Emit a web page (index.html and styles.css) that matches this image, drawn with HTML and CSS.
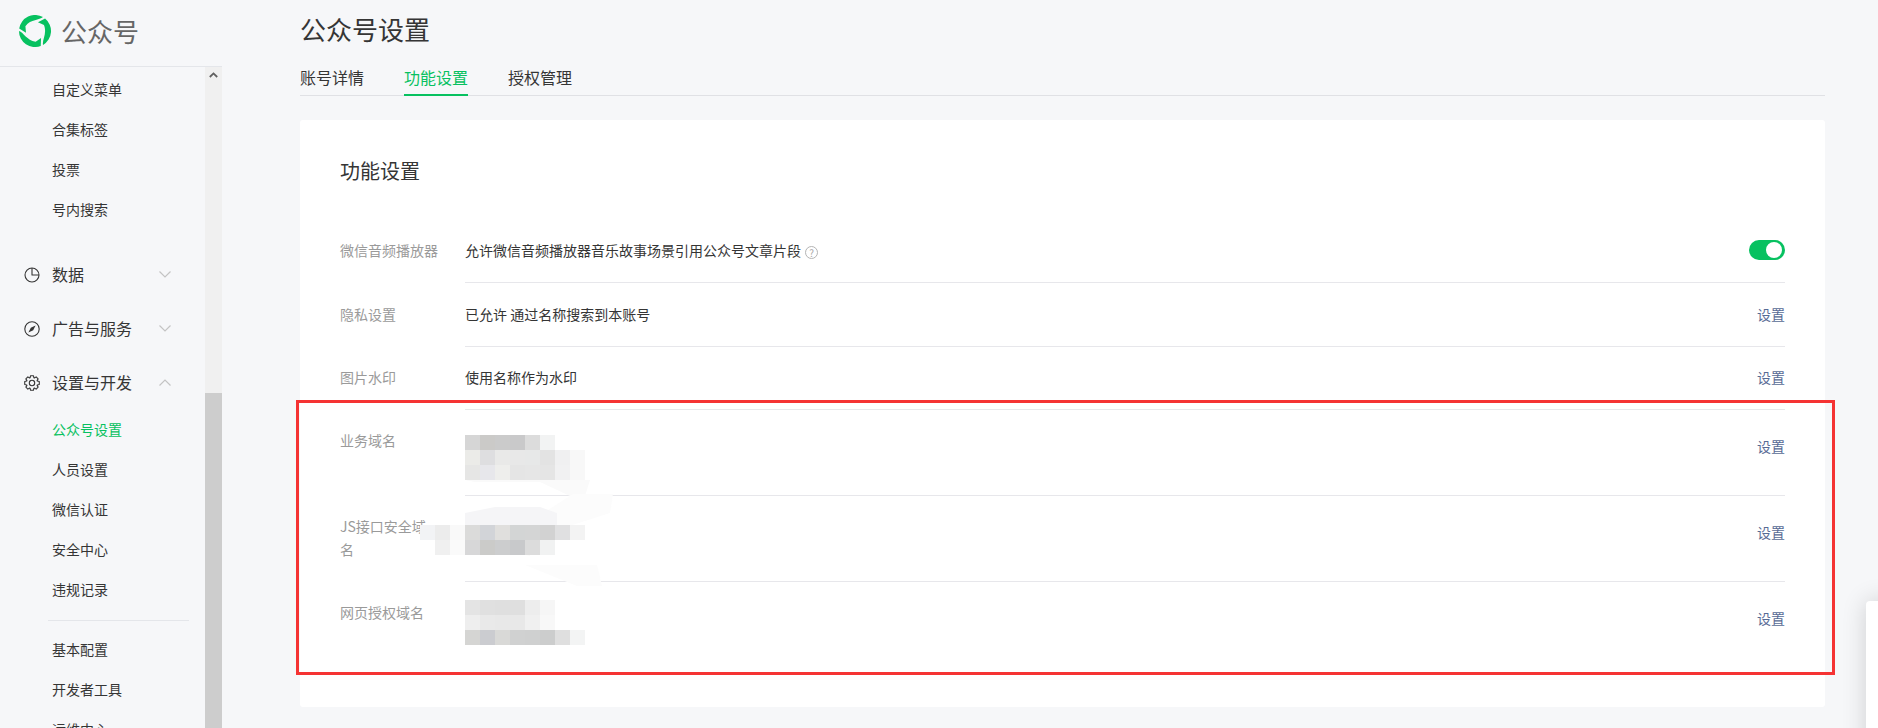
FILE: index.html
```html
<!DOCTYPE html>
<html lang="zh-CN">
<head>
<meta charset="utf-8">
<title>公众号设置</title>
<link rel="stylesheet" href="styles.css">
</head>
<body>
<aside class="sidebar">
  <header class="brand">
    <svg class="brand-logo" viewBox="-17 -16 34 32">
      <g fill="#07c160">
        <path d="M-15.8 -2.5A16 16 0 0 1 8 -13.9C4.5 -10.5 -4 -12 -9.6 -4.8L-9 1.8Z"/>
        <path d="M-15.8 -2.5A16 16 0 0 1 8 -13.9C4.5 -10.5 -4 -12 -9.6 -4.8L-9 1.8Z" transform="rotate(120)"/>
        <path d="M-15.8 -2.5A16 16 0 0 1 8 -13.9C4.5 -10.5 -4 -12 -9.6 -4.8L-9 1.8Z" transform="rotate(240)"/>
      </g>
    </svg>
    <span class="brand-name">公众号</span>
  </header>
  <div class="side-body">
    <nav class="nav">
      <a class="sub">自定义菜单</a>
      <a class="sub">合集标签</a>
      <a class="sub">投票</a>
      <a class="sub">号内搜索</a>
      <div class="group group-first">
        <svg class="group-icon" viewBox="0 0 16 16"><circle cx="8" cy="8" r="7"/><path d="M8 1V8H15"/></svg>
        <span>数据</span>
        <svg class="chev" viewBox="0 0 12 7"><path d="M0.5 0.5L6 6L11.5 0.5"/></svg>
      </div>
      <div class="group">
        <svg class="group-icon" viewBox="0 0 16 16"><circle cx="8" cy="8" r="7.2"/><path class="needle" d="M11.6 4.4L9.2 9.2L4.4 11.6L6.8 6.8Z"/></svg>
        <span>广告与服务</span>
        <svg class="chev" viewBox="0 0 12 7"><path d="M0.5 0.5L6 6L11.5 0.5"/></svg>
      </div>
      <div class="group">
        <svg class="group-icon" viewBox="-8 -8 16 16"><polygon points="7.27,-1.41 7.27,1.41 5.26,1.92 5.08,2.37 6.13,4.14 4.14,6.13 2.37,5.08 1.92,5.26 1.41,7.27 -1.41,7.27 -1.92,5.26 -2.37,5.08 -4.14,6.13 -6.13,4.14 -5.08,2.37 -5.26,1.92 -7.27,1.41 -7.27,-1.41 -5.26,-1.92 -5.08,-2.37 -6.13,-4.14 -4.14,-6.13 -2.37,-5.08 -1.92,-5.26 -1.41,-7.27 1.41,-7.27 1.92,-5.26 2.37,-5.08 4.14,-6.13 6.13,-4.14 5.08,-2.37 5.26,-1.92"/><circle r="2.7"/></svg>
        <span>设置与开发</span>
        <svg class="chev" viewBox="0 0 12 7"><path d="M0.5 6.5L6 1L11.5 6.5"/></svg>
      </div>
      <a class="sub sub-active">公众号设置</a>
      <a class="sub">人员设置</a>
      <a class="sub">微信认证</a>
      <a class="sub">安全中心</a>
      <a class="sub">违规记录</a>
      <hr class="nav-rule">
      <a class="sub">基本配置</a>
      <a class="sub">开发者工具</a>
      <a class="sub">运维中心</a>
    </nav>
    <div class="scrollbar">
      <svg class="scroll-arrow" viewBox="0 0 9 6"><path d="M0.8 5L4.5 1.4L8.2 5"/></svg>
      <div class="scroll-thumb"></div>
    </div>
  </div>
</aside>

<main class="main">
  <h1 class="page-title">公众号设置</h1>
  <div class="tabs">
    <a class="tab">账号详情</a>
    <a class="tab tab-active">功能设置</a>
    <a class="tab">授权管理</a>
  </div>
  <section class="card">
    <h2 class="card-title">功能设置</h2>

    <div class="row">
      <div class="row-label">微信音频播放器</div>
      <div class="row-body">
        <div class="row-value">允许微信音频播放器音乐故事场景引用公众号文章片段<span class="help">?</span></div>
        <span class="switch"><span class="knob"></span></span>
      </div>
    </div>

    <div class="row">
      <div class="row-label">隐私设置</div>
      <div class="row-body">
        <div class="row-value">已允许 通过名称搜索到本账号</div>
        <a class="action">设置</a>
      </div>
    </div>

    <div class="row">
      <div class="row-label">图片水印</div>
      <div class="row-body">
        <div class="row-value">使用名称作为水印</div>
        <a class="action">设置</a>
      </div>
    </div>

    <div class="row row-tall">
      <div class="row-label">业务域名</div>
      <div class="row-body">
        <div class="row-value">
          <svg class="mosaic" viewBox="0 0 120 45">
            <path fill="#fafafa" d="M0 50L10 52H75L105 66H120L125 50Z"/>
            <rect x="0" y="5" width="15" height="15" fill="#d6d6d6"/><rect x="15" y="5" width="15" height="15" fill="#cbcac8"/><rect x="30" y="5" width="15" height="15" fill="#cbcbcb"/><rect x="45" y="5" width="15" height="15" fill="#c9c9ca"/><rect x="60" y="5" width="15" height="15" fill="#dcdcdc"/><rect x="75" y="5" width="15" height="15" fill="#f2f3f3"/>
            <rect x="0" y="20" width="15" height="15" fill="#ebebe8"/><rect x="15" y="20" width="15" height="15" fill="#dedee0"/><rect x="30" y="20" width="15" height="15" fill="#e9e9e8"/><rect x="45" y="20" width="15" height="15" fill="#e8e8e8"/><rect x="60" y="20" width="15" height="15" fill="#e7e8e8"/><rect x="75" y="20" width="15" height="15" fill="#e3e3e3"/><rect x="90" y="20" width="15" height="15" fill="#f0f0f1"/><rect x="105" y="20" width="15" height="15" fill="#f8f8f8"/>
            <rect x="0" y="35" width="15" height="15" fill="#e6e6e5"/><rect x="15" y="35" width="15" height="15" fill="#e7e7eb"/><rect x="30" y="35" width="15" height="15" fill="#eeeeec"/><rect x="45" y="35" width="15" height="15" fill="#e5e5e5"/><rect x="60" y="35" width="15" height="15" fill="#e6e6e6"/><rect x="75" y="35" width="15" height="15" fill="#e5e5e5"/><rect x="90" y="35" width="15" height="15" fill="#f1f1f2"/><rect x="105" y="35" width="15" height="15" fill="#f8f8f8"/>
          </svg>
        </div>
        <a class="action">设置</a>
      </div>
    </div>

    <div class="row row-tall">
      <div class="row-label">JS接口安全域名</div>
      <div class="row-body">
        <div class="row-value">
          <svg class="mosaic" viewBox="0 0 120 45">
            <path fill="#fcfcfc" d="M108 -22H148L145 -3L92 14H60L80 -4Z"/>
            <path fill="#f5f5f7" d="M0 -3L30 -9H75L92 -3V9H0Z"/>
            <path fill="#fbfbfb" d="M35 24H65V40L35 34Z"/>
            <path fill="#fcfcfc" d="M60 49H132L137 70H112Z"/>
            <rect x="-45" y="9" width="15" height="15" fill="#f2f3f5"/><rect x="-30" y="9" width="15" height="15" fill="#ececec"/><rect x="-15" y="9" width="15" height="15" fill="#f9f9f9"/>
            <rect x="-30" y="24" width="15" height="15" fill="#f0f0f0"/><rect x="-15" y="24" width="15" height="15" fill="#fafafa"/>
            <rect x="0" y="9" width="15" height="15" fill="#dbdbda"/><rect x="15" y="9" width="15" height="15" fill="#d2d4d8"/><rect x="30" y="9" width="15" height="15" fill="#e0dfdd"/><rect x="45" y="9" width="15" height="15" fill="#d3d5d5"/><rect x="60" y="9" width="15" height="15" fill="#d4d5d5"/><rect x="75" y="9" width="15" height="15" fill="#d2d2d2"/><rect x="90" y="9" width="15" height="15" fill="#e0e0e1"/><rect x="105" y="9" width="15" height="15" fill="#f3f3f3"/>
            <rect x="0" y="24" width="15" height="15" fill="#d7d7d8"/><rect x="15" y="24" width="15" height="15" fill="#cbcbc9"/><rect x="30" y="24" width="15" height="15" fill="#cccdce"/><rect x="45" y="24" width="15" height="15" fill="#c8c9cb"/><rect x="60" y="24" width="15" height="15" fill="#dcdcdc"/><rect x="75" y="24" width="15" height="15" fill="#f1f2f2"/>
          </svg>
        </div>
        <a class="action">设置</a>
      </div>
    </div>

    <div class="row row-tall row-last">
      <div class="row-label">网页授权域名</div>
      <div class="row-body">
        <div class="row-value">
          <svg class="mosaic" viewBox="0 0 120 45">
            <rect x="0" y="-2" width="15" height="15" fill="#e4e4e4"/><rect x="15" y="-2" width="15" height="15" fill="#e0e0e0"/><rect x="30" y="-2" width="15" height="15" fill="#dfdfdf"/><rect x="45" y="-2" width="15" height="15" fill="#dfdfdf"/><rect x="60" y="-2" width="15" height="15" fill="#ededed"/><rect x="75" y="-2" width="15" height="15" fill="#f6f6f6"/>
            <rect x="0" y="13" width="15" height="15" fill="#eeeeee"/><rect x="15" y="13" width="15" height="15" fill="#e9e9e9"/><rect x="30" y="13" width="15" height="15" fill="#e8e8e8"/><rect x="45" y="13" width="15" height="15" fill="#e8e8e8"/><rect x="60" y="13" width="15" height="15" fill="#f0f0f0"/><rect x="75" y="13" width="15" height="15" fill="#f8f8f8"/>
            <rect x="0" y="28" width="15" height="15" fill="#d5d5d3"/><rect x="15" y="28" width="15" height="15" fill="#cbccd0"/><rect x="30" y="28" width="15" height="15" fill="#d9d9d7"/><rect x="45" y="28" width="15" height="15" fill="#d0d1d1"/><rect x="60" y="28" width="15" height="15" fill="#cfd0d0"/><rect x="75" y="28" width="15" height="15" fill="#cccdcd"/><rect x="90" y="28" width="15" height="15" fill="#dfdfdf"/><rect x="105" y="28" width="15" height="15" fill="#f3f4f4"/>
          </svg>
        </div>
        <a class="action">设置</a>
      </div>
    </div>
  </section>
</main>

<div class="annotation"></div>
<div class="corner-panel"></div>
</body>
</html>
```

FILE: styles.css
```css
* {
  box-sizing: border-box;
}

html,
body {
  margin: 0;
  height: 728px;
  overflow: hidden;
}

body {
  display: flex;
  background: #f6f7f9;
  color: #353535;
  font-family: "Noto Sans CJK SC", "Noto Sans", "Liberation Sans", sans-serif;
}

/* Sidebar */
.sidebar {
  flex: 0 0 222px;
  height: 728px;
  display: flex;
  flex-direction: column;
}

.brand {
  flex: 0 0 67px;
  display: flex;
  align-items: center;
  gap: 9px;
  padding: 0 0 5px 18px;
  border-bottom: 1px solid #e4e6ea;
}

.brand-logo {
  width: 34px;
  height: 32px;
}

.brand-name {
  font-size: 26px;
  color: #666;
  line-height: 32px;
}

.side-body {
  flex: 1;
  display: flex;
  min-height: 0;
}

.nav {
  flex: 1;
  padding-top: 2px;
  overflow: hidden;
}

.sub {
  display: block;
  height: 40px;
  line-height: 40px;
  padding-left: 52px;
  font-size: 14px;
  color: #353535;
}

.sub-active {
  color: #07c160;
}

.group {
  display: flex;
  align-items: center;
  gap: 12px;
  height: 54px;
  padding-left: 24px;
  font-size: 16px;
  color: #353535;
}

.group-first {
  margin-top: 18px;
}

.group-icon {
  flex: 0 0 16px;
  width: 16px;
  height: 16px;
  margin-top: 1px;
  overflow: visible;
  fill: none;
  stroke: #353535;
  stroke-width: 1.1;
  stroke-linejoin: round;
}

.needle {
  fill: #353535;
  stroke: none;
}

.chev {
  width: 12px;
  height: 7px;
  margin-left: auto;
  margin-right: 34px;
  fill: none;
  stroke: #c4c4c4;
  stroke-width: 1.2;
}

.nav-rule {
  height: 1px;
  margin: 11px 16px 8px 48px;
  border: 0;
  background: #e4e6ea;
}

.scrollbar {
  flex: 0 0 17px;
  position: relative;
  display: flex;
  flex-direction: column;
  background: #f0f0f0;
}

.scroll-arrow {
  position: absolute;
  top: 5px;
  left: 4px;
  width: 9px;
  height: 6px;
  fill: none;
  stroke: #606060;
  stroke-width: 1.8;
}

.scroll-thumb {
  flex: 1;
  margin-top: 326px;
  background: #cdcdcd;
}

/* Main */
.main {
  flex: 1;
  min-width: 0;
  margin: 0 53px 0 78px;
  padding-top: 12px;
}

.page-title {
  margin: 0;
  font-size: 26px;
  line-height: 34px;
  font-weight: 400;
  color: #353535;
}

.tabs {
  display: flex;
  gap: 40px;
  margin-top: 16px;
  border-bottom: 1px solid #e0e1e5;
}

.tab {
  position: relative;
  height: 33px;
  line-height: 31px;
  font-size: 16px;
  color: #353535;
}

.tab-active {
  color: #07c160;
}

.tab-active::after {
  content: "";
  position: absolute;
  left: 0;
  right: 0;
  bottom: -1px;
  height: 2px;
  background: #07c160;
}

.card {
  margin-top: 24px;
  padding: 36px 40px 40px;
  background: #fff;
  border-radius: 3px;
}

.card-title {
  margin: 0 0 33.4px;
  font-size: 20px;
  line-height: 30px;
  font-weight: 400;
  color: #353535;
}

.row {
  display: flex;
  font-size: 14px;
  line-height: 22.6px;
}

.row-label {
  flex: 0 0 98px;
  margin-right: 27px;
  padding-top: 19.8px;
  color: #9a9a9a;
  word-break: break-all;
}

.row-tall .row-label {
  padding-top: 19px;
}

.row-body {
  flex: 1;
  display: flex;
  justify-content: space-between;
  align-items: flex-start;
  padding: 19.8px 0 20.2px;
  border-bottom: 1px solid #e7e7eb;
}

.row-tall .row-body {
  padding: 20px 0;
}

.row-last .row-body {
  border-bottom: 0;
}

.row-value {
  color: #353535;
}

.row-tall .row-value {
  height: 45px;
}

.help {
  display: inline-block;
  width: 13px;
  height: 13px;
  margin-left: 4px;
  border: 1px solid #b4b4b4;
  border-radius: 50%;
  font-size: 10px;
  line-height: 11px;
  text-align: center;
  color: #a8a8a8;
  vertical-align: -1px;
}

.switch {
  display: flex;
  justify-content: flex-end;
  align-items: center;
  width: 36px;
  height: 20px;
  margin-top: 1px;
  padding-right: 3px;
  background: #07c160;
  border-radius: 10px;
}

.knob {
  width: 16px;
  height: 16px;
  background: #fff;
  border-radius: 50%;
}

.action {
  font-size: 14px;
  color: #576b95;
}

.row-tall .action {
  margin-top: 5px;
}

.mosaic {
  display: block;
  width: 120px;
  height: 45px;
  overflow: visible;
}

/* Overlays */
.annotation {
  position: absolute;
  left: 296px;
  top: 400px;
  width: 1539px;
  height: 275px;
  border: 3.5px solid #f53333;
}

.corner-panel {
  position: absolute;
  left: 1866px;
  top: 601px;
  width: 40px;
  height: 160px;
  background: #fff;
  border-radius: 4px;
  box-shadow: 0 0 24px rgba(0, 0, 0, 0.16);
}
```
